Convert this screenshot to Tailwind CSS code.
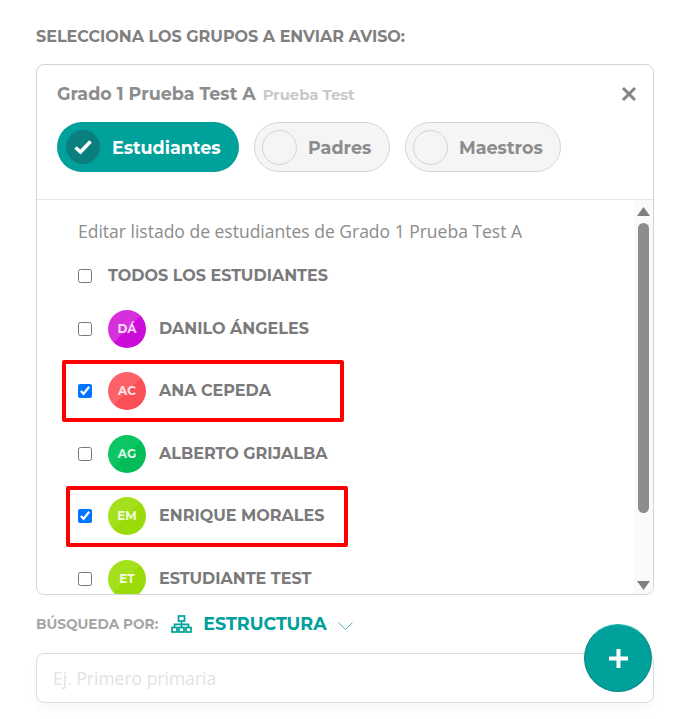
<!DOCTYPE html>
<html lang="es">
  <head>
    <meta charset="UTF-8" />
    <title>Aviso</title>
    <script src="https://cdn.jsdelivr.net/npm/@tailwindcss/browser@4"></script>
  </head>
  <body class="bg-white font-['Montserrat','Inter','Open_Sans',sans-serif] text-[#7a7a7a] w-[692px] h-[719px] overflow-hidden relative">
    <div class="pl-[36px] pr-[38px] pt-[28px]">
      <h2 class="text-[16px] leading-[17px] font-bold text-[#7f7f7f]">SELECCIONA LOS GRUPOS A ENVIAR AVISO:</h2>

      <div class="mt-[19px] h-[531px] border border-[#d4d4d4] rounded-[8px] overflow-hidden">
        <div class="h-[135px] border-b border-[#e5e5e5] px-[20px] pt-[18px] relative">
          <div class="flex items-baseline gap-[7px]">
            <span class="text-[17.5px] leading-[22px] font-bold text-[#8c8c8c]">Grado 1 Prueba Test A</span>
            <span class="text-[14.8px] font-bold text-[#c9c9c9]">Prueba Test</span>
          </div>
          <span class="absolute right-[16px] top-[21px] text-[#858585]">
            <svg width="16" height="16" viewBox="0 0 16 16"><path d="M2 2l12 12M14 2L2 14" stroke="currentColor" stroke-width="3"/></svg>
          </span>
          <div class="flex gap-[15px] mt-[16px]">
            <div class="flex items-center w-[182px] h-[50px] rounded-full bg-[#00a09b] pl-[9px] gap-[12px]">
              <span class="w-[34px] h-[34px] rounded-full bg-[#0a7f7d] flex items-center justify-center">
                <svg width="20" height="16" viewBox="0 0 20 16"><path d="M2.5 8.5l5 4.5 10-10.5" fill="none" stroke="#fff" stroke-width="3.6"/></svg>
              </span>
              <span class="pt-px text-[17.5px] font-bold text-white">Estudiantes</span>
            </div>
            <div class="flex items-center w-[136px] h-[50px] rounded-full bg-[#f5f5f5] border border-[#d4d4d4] pl-[7px] gap-[11px]">
              <span class="w-[35px] h-[35px] rounded-full border border-[#d4d4d4]"></span>
              <span class="pt-px text-[17.5px] font-bold text-[#8c8c8c]">Padres</span>
            </div>
            <div class="flex items-center w-[156px] h-[50px] rounded-full bg-[#f5f5f5] border border-[#d4d4d4] pl-[7px] gap-[11px]">
              <span class="w-[35px] h-[35px] rounded-full border border-[#d4d4d4]"></span>
              <span class="pt-px text-[17.5px] font-bold text-[#8c8c8c]">Maestros</span>
            </div>
          </div>
        </div>

        <div class="flex h-[395px]">
          <div class="flex-1 pl-[41px] pt-[20px]">
            <p class="font-['Open_Sans',sans-serif] text-[17.5px] leading-[22px] text-[#8c8c8c]">Editar listado de estudiantes de Grado 1 Prueba Test A</p>
            <label class="flex items-center h-[22px] mt-[23px] gap-[16px]">
              <input type="checkbox" class="w-[14px] h-[14px]" />
              <span class="text-[16px] font-bold">TODOS LOS ESTUDIANTES</span>
            </label>
            <div class="flex flex-col gap-[24.5px] mt-[22.6px]">
              <label class="flex items-center h-[38px] gap-[16px]">
                <input type="checkbox" class="w-[14px] h-[14px]" />
                <span class="w-[38px] h-[38px] rounded-full bg-[linear-gradient(135deg,#d630dc_50%,#cc0cd8_50%)] flex items-center justify-center text-white/85 text-[12px] font-bold">DÁ</span>
                <span class="text-[16px] font-bold -ml-[3px]">DANILO ÁNGELES</span>
              </label>
              <label class="flex items-center h-[38px] gap-[16px]">
                <input type="checkbox" checked class="w-[14px] h-[14px]" />
                <span class="w-[38px] h-[38px] rounded-full bg-[linear-gradient(135deg,#fc6168_50%,#fb4f58_50%)] flex items-center justify-center text-white/85 text-[12px] font-bold">AC</span>
                <span class="text-[16px] font-bold -ml-[3px]">ANA CEPEDA</span>
              </label>
              <label class="flex items-center h-[38px] gap-[16px]">
                <input type="checkbox" class="w-[14px] h-[14px]" />
                <span class="w-[38px] h-[38px] rounded-full bg-[linear-gradient(135deg,#0cc663_50%,#04bd58_50%)] flex items-center justify-center text-white/85 text-[12px] font-bold">AG</span>
                <span class="text-[16px] font-bold -ml-[3px]">ALBERTO GRIJALBA</span>
              </label>
              <label class="flex items-center h-[38px] gap-[16px]">
                <input type="checkbox" checked class="w-[14px] h-[14px]" />
                <span class="w-[38px] h-[38px] rounded-full bg-[linear-gradient(135deg,#a4e01c_50%,#9adb08_50%)] flex items-center justify-center text-white/85 text-[12px] font-bold">EM</span>
                <span class="text-[16px] font-bold -ml-[3px]">ENRIQUE MORALES</span>
              </label>
              <label class="flex items-center h-[38px] gap-[16px]">
                <input type="checkbox" class="w-[14px] h-[14px]" />
                <span class="w-[38px] h-[38px] rounded-full bg-[linear-gradient(135deg,#a4e01c_50%,#9adb08_50%)] flex items-center justify-center text-white/85 text-[12px] font-bold">ET</span>
                <span class="text-[16px] font-bold -ml-[3px]">ESTUDIANTE TEST</span>
              </label>
            </div>
          </div>
          <div class="w-[19px] bg-[#fafafa] flex flex-col items-center pt-[7px]">
            <svg width="13" height="9" viewBox="0 0 13 9"><path d="M6.5 0l6.5 9H0z" fill="#808080"/></svg>
            <div class="w-[11px] h-[290px] mt-[7px] rounded-full bg-[#8c8c8c]"></div>
            <svg class="mt-auto mb-[5px]" width="13" height="9" viewBox="0 0 13 9"><path d="M0 0h13L6.5 9z" fill="#808080"/></svg>
          </div>
        </div>
      </div>

      <div class="flex items-center mt-[17px] h-[24px]">
        <span class="text-[13.7px] font-bold text-[#a6a6a6]">BÚSQUEDA POR:</span>
        <svg class="ml-[13px]" width="21" height="18" viewBox="0 0 21 18" fill="none" stroke="#00a09b" stroke-width="1.7"><rect x="7.5" y="1" width="6" height="5"/><rect x="1" y="12.5" width="5" height="4.5"/><rect x="8" y="12.5" width="5" height="4.5"/><rect x="15" y="12.5" width="5" height="4.5"/><path d="M10.5 6v6.5M3.5 12.5V9.3h14v3.2"/></svg>
        <span class="ml-[11px] pt-px text-[17.5px] font-bold text-[#00a09b]">ESTRUCTURA</span>
        <svg class="ml-[11px] mt-[3px]" width="15" height="8" viewBox="0 0 15 8" fill="none" stroke="#4db8b4" stroke-width="1"><path d="M0.5 0.5l7 7 7-7"/></svg>
      </div>

      <div class="mt-[17px] h-[50px] border border-[#dcdcdc] rounded-[8px] flex items-center px-[16px] font-['Open_Sans',sans-serif] text-[17.5px] text-[#e2e2e2] shadow-[0_6px_8px_rgba(0,0,0,0.03)]">Ej. Primero primaria</div>
    </div>

    <!-- boton flotante -->
    <button class="absolute left-[584px] top-[624px] w-[68px] h-[68px] rounded-full bg-[#00a09b] border border-[#0a8885] border-t-[#18b5b0] flex items-center justify-center">
      <svg width="21" height="21" viewBox="0 0 21 21"><path d="M10.5 1v19M1 10.500h19" stroke="#fff" stroke-width="4"/></svg>
    </button>

    <!-- marcas rojas -->
    <div class="absolute left-[62px] top-[360px] w-[282px] h-[62px] border-[4px] border-[#ff0000] rounded-[2px]"></div>
    <div class="absolute left-[66px] top-[486px] w-[282px] h-[61px] border-[4px] border-[#ff0000] rounded-[2px]"></div>
  </body>
</html>
